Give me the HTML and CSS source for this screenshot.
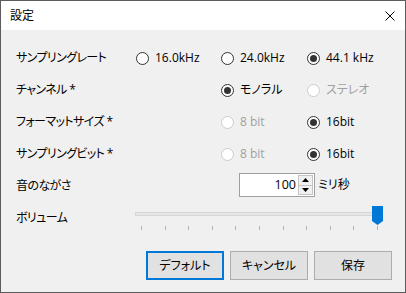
FILE: index.html
```html
<!DOCTYPE html>
<html lang="ja">
<head>
<meta charset="utf-8">
<title>設定</title>
<link rel="stylesheet" href="styles.css">
</head>
<body>
<div class="window">
  <div class="titlebar">
    <span class="title">設定</span>
    <svg class="close" width="10" height="10" viewBox="0 0 10 10"><path d="M0.5 0.5 L9.5 9.5 M9.5 0.5 L0.5 9.5" stroke="#000" stroke-width="1" fill="none"/></svg>
  </div>
  <div class="content">
    <div class="form">
      <div class="label">サンプリングレート</div>
      <label class="radio"><span class="dot"></span>16.0kHz</label>
      <label class="radio"><span class="dot"></span>24.0kHz</label>
      <label class="radio"><span class="dot on"></span>44.1 kHz</label>

      <div class="label">チャンネル *</div>
      <div></div>
      <label class="radio"><span class="dot on"></span>モノラル</label>
      <label class="radio disabled"><span class="dot"></span>ステレオ</label>

      <div class="label">フォーマットサイズ *</div>
      <div></div>
      <label class="radio disabled"><span class="dot"></span>8 bit</label>
      <label class="radio"><span class="dot on"></span>16bit</label>

      <div class="label">サンプリングビット *</div>
      <div></div>
      <label class="radio disabled"><span class="dot"></span>8 bit</label>
      <label class="radio"><span class="dot on"></span>16bit</label>

      <div class="label">音のながさ</div>
      <div></div>
      <div class="spinrow">
        <div class="spinner">
          <span class="value">100</span>
          <span class="spins">
            <span class="spin"><svg width="7" height="4" viewBox="0 0 7 4"><path d="M3.5 0 L7 4 L0 4 Z" fill="#000"/></svg></span>
            <span class="spin"><svg width="7" height="4" viewBox="0 0 7 4"><path d="M0 0 L7 0 L3.5 4 Z" fill="#000"/></svg></span>
          </span>
        </div>
        <span class="unit">ミリ秒</span>
      </div>

      <div class="label">ボリューム</div>
      <div class="slider">
        <div class="track"></div>
        <div class="ticks">
          <i></i><i></i><i></i><i></i><i></i><i></i><i></i><i></i><i></i><i></i><i></i>
        </div>
        <svg class="thumb" width="11" height="19" viewBox="0 0 11 19"><path d="M0 0 H11 V15 L5.5 19 L0 15 Z" fill="#0078d7"/></svg>
      </div>
    </div>
    <div class="buttons">
      <button class="btn default">デフォルト</button>
      <button class="btn">キャンセル</button>
      <button class="btn">保存</button>
    </div>
  </div>
</div>
</body>
</html>
```

FILE: styles.css
```css
* { box-sizing: border-box; }
html, body { margin: 0; padding: 0; background: #f0f0f0; }
body {
  font-family: "Open Sans", "Noto Sans CJK JP", sans-serif;
  font-size: 12px;
  color: #000;
  font-feature-settings: "palt";
}
.window {
  width: 406px;
  height: 293px;
  border: 1px solid #5c5c5c;
  background: #f0f0f0;
  display: flex;
  flex-direction: column;
}
.titlebar {
  height: 29px;
  background: #fff;
  display: flex;
  align-items: center;
  justify-content: space-between;
  padding: 1px 10px 0 9px;
  flex: none;
}
.title { font-size: 12px; line-height: 14px; }
.close { display: block; }
.content {
  flex: 1;
  display: flex;
  flex-direction: column;
  padding: 12px 13px 12px 15px;
}
.form {
  display: grid;
  grid-template-columns: 120px 85px 86px 1fr;
  grid-auto-rows: 32px;
  align-items: center;
}
.label { line-height: 16px; white-space: nowrap; letter-spacing: -0.6px; }
.radio {
  display: flex;
  align-items: center;
  gap: 6px;
  line-height: 16px;
  white-space: nowrap;
}
.dot {
  width: 13px;
  height: 13px;
  border: 1px solid #333;
  border-radius: 50%;
  background: #fff;
  display: flex;
  align-items: center;
  justify-content: center;
  flex: none;
}
.dot.on::after {
  content: "";
  width: 7px;
  height: 7px;
  border-radius: 50%;
  background: #333;
}
.radio.disabled { color: #a0a0a0; }
.radio.disabled .dot { border-color: #cccccc; background: #fff; }
.spinrow {
  grid-column: 3 / 5;
  display: flex;
  align-items: center;
  margin-left: 18px;
  margin-top: -2px;
}
.spinner {
  width: 76px;
  height: 24px;
  border: 1px solid #a0a0a0;
  background: #fff;
  display: flex;
  align-items: center;
  justify-content: flex-end;
  padding: 1px;
}
.value { line-height: 16px; margin-right: 2px; font-size: 12.5px; }
.spins {
  display: flex;
  flex-direction: column;
  width: 15px;
  height: 20px;
}
.spin {
  flex: 1;
  border: 1px solid #c4c4c4;
  background: #f0f0f0;
  display: flex;
  align-items: center;
  justify-content: center;
}
.spin + .spin { border-top: none; }
.spin svg { display: block; }
.unit { margin-left: 3px; line-height: 16px; }
.slider {
  grid-column: 2 / 5;
  align-self: stretch;
  position: relative;
  margin-left: -1px;
  width: 248px;
  padding-top: 10px;
}
.track {
  height: 4px;
  background: #e7e7e7;
  border: 1px solid #d6d6d6;
  margin-right: 4px;
}
.ticks {
  display: flex;
  justify-content: space-between;
  margin: 10px 5px 0 6px;
  height: 4px;
}
.ticks i {
  display: block;
  width: 1px;
  height: 4px;
  background: #b4b4b4;
}
.thumb {
  position: absolute;
  top: 4px;
  left: 237px;
  display: block;
}
.buttons {
  margin-top: auto;
  display: flex;
  justify-content: flex-end;
  gap: 6px;
}
.btn {
  width: 78px;
  height: 29px;
  background: #e1e1e1;
  border: 1px solid #adadad;
  font-family: "Open Sans", "Noto Sans CJK JP", sans-serif;
  font-feature-settings: "palt";
  font-size: 12px;
  color: #000;
  padding: 0;
  line-height: 16px;
}
.btn.default { border: 2px solid #0078d7; }
```
